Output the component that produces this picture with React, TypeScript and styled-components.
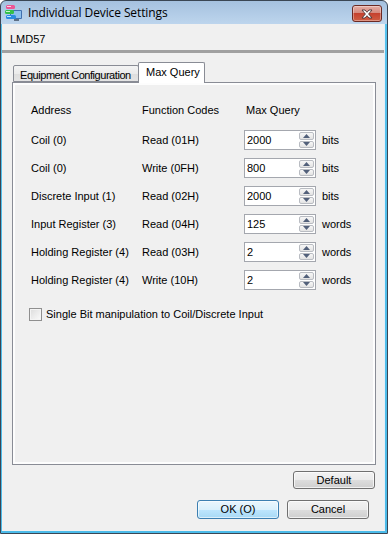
import React from 'react';
import styled, { createGlobalStyle } from 'styled-components';

const Global = createGlobalStyle`
  html, body { margin: 0; padding: 0; background: #ffffff; }
  body {
    width: 388px; height: 534px; overflow: hidden;
    font-family: "Liberation Sans", Arial, sans-serif;
    font-size: 11px; color: #000;
  }
  * { box-sizing: border-box; }
`;

const Window = styled.div`
  width: 388px;
  height: 534px;
  border: 1px solid #3a4654;
  border-radius: 6px 6px 0 0;
  background: linear-gradient(#a5c1df 0, #bdd5ed 23px, #55c2ee 23px, #4bbbe9 100%);
  display: flex;
  flex-direction: column;
  overflow: hidden;
`;

const TitleBar = styled.div`
  height: 23px;
  flex: none;
  display: flex;
  align-items: center;
  padding: 0 5px 0 4px;
  gap: 5px;
`;

const TitleText = styled.div`
  font-family: "Open Sans", "Noto Sans", sans-serif;
  font-size: 12px;
  color: #000;
  flex: 1;
  letter-spacing: -0.1px;
`;

const CloseButton = styled.div`
  width: 30px;
  height: 17px;
  border: 1px solid #6b2a24;
  border-radius: 3px;
  background: linear-gradient(#e6aea5 0%, #d58a7e 45%, #c5412e 50%, #cf5e43 100%);
  box-shadow: inset 0 0 0 1px rgba(255, 255, 255, 0.35);
  display: flex;
  align-items: center;
  justify-content: center;
  margin-top: 2px;
`;

const Client = styled.div`
  flex: 1;
  margin: 0 2px 2px 1px;
  background: #f0f0f0;
  display: flex;
  flex-direction: column;
  border-right: 1px solid #e4eef6;
`;

const DeviceName = styled.div`
  padding: 9px 0 0 8px;
  line-height: 13px;
  height: 22px;
`;

const Separator = styled.div`
  height: 3px;
  background: #a0a0a0;
  margin-top: 4px;
`;

const TabStrip = styled.div`
  display: flex;
  align-items: flex-end;
  margin: 9px 0 0 11px;
  height: 20px;
  position: relative;
  z-index: 1;
`;

const Tab = styled.div<{ $active?: boolean }>`
  height: ${(p) => (p.$active ? '21px' : '17px')};
  width: ${(p) => (p.$active ? '67px' : '126px')};
  margin-left: ${(p) => (p.$active ? '-1px' : '0')};
  margin-bottom: ${(p) => (p.$active ? '-1px' : '0')};
  border: 1px solid #898c95;
  border-bottom: ${(p) => (p.$active ? 'none' : '1px solid #898c95')};
  border-radius: 2px 2px 0 0;
  background: ${(p) =>
    p.$active ? '#ffffff' : 'linear-gradient(#f3f3f3 0%, #ebebeb 50%, #dedede 51%, #e4e4e4 100%)'};
  padding: ${(p) => (p.$active ? '3px 0 0 7px' : '3px 0 0 6px')};
  letter-spacing: ${(p) => (p.$active ? '0' : '-0.45px')};
  line-height: 13px;
  white-space: nowrap;
  overflow: hidden;
`;

const Panel = styled.div`
  width: 364px;
  height: 383px;
  margin-left: 10px;
  border: 1px solid #898c95;
  box-shadow: inset 0 0 0 2px #fdfdfd;
  background: #f0f0f0;
  padding: 14px 0 0 18px;
  display: flex;
  flex-direction: column;
`;

const Grid = styled.div`
  display: grid;
  grid-template-columns: 111px 102px 78px auto;
  align-items: center;
`;

const HeaderCell = styled.div<{ $shift?: number }>`
  height: 26px;
  display: flex;
  align-items: center;
  padding-left: ${(p) => p.$shift ?? 0}px;
  margin-bottom: 3px;
`;

const Cell = styled.div`
  height: 28px;
  display: flex;
  align-items: center;
`;

const SpinBox = styled.div`
  width: 72px;
  height: 20px;
  border: 1px solid #a4a7ae;
  background: #fff;
  display: flex;
  align-items: stretch;
  padding: 1px 1px 1px 2px;
`;

const SpinValue = styled.div`
  flex: 1;
  display: flex;
  align-items: center;
  line-height: 13px;
`;

const SpinButtons = styled.div`
  width: 15px;
  display: flex;
  flex-direction: column;
  gap: 1px;
`;

const SpinButton = styled.div`
  flex: 1;
  border: 1px solid #b9bcc2;
  border-radius: 2px;
  background: linear-gradient(#f7f7f7, #e3e3e3);
  display: flex;
  align-items: center;
  justify-content: center;
`;

const CheckRow = styled.div`
  display: flex;
  align-items: center;
  gap: 4px;
  margin: 13px 0 0 -2px;
  height: 14px;
`;

const CheckBox = styled.div`
  width: 13px;
  height: 13px;
  border: 1px solid #8f8f8f;
  background: linear-gradient(135deg, #dcdcdc, #fbfbfb);
  box-shadow: inset 0 0 0 1px #f4f4f4;
`;

const ButtonRow = styled.div<{ $top: number; $right: number }>`
  display: flex;
  justify-content: flex-end;
  gap: 8px;
  margin-top: ${(p) => p.$top}px;
  padding-right: ${(p) => p.$right}px;
`;

const Button = styled.div<{ $primary?: boolean; $h?: number }>`
  width: 82px;
  height: ${(p) => p.$h ?? 19}px;
  border: 1px solid ${(p) => (p.$primary ? '#3c7fb1' : '#707070')};
  border-radius: 3px;
  background: ${(p) =>
    p.$primary
      ? 'linear-gradient(#eaf6fd 0%, #d9f0fc 50%, #bee6fd 51%, #a7d9f5 100%)'
      : 'linear-gradient(#f2f2f2 0%, #ebebeb 50%, #dddddd 51%, #cfcfcf 100%)'};
  box-shadow: inset 0 0 0 1px ${(p) => (p.$primary ? 'rgba(255,255,255,0.6)' : 'rgba(255,255,255,0.7)')};
  display: flex;
  align-items: center;
  justify-content: center;
  line-height: 13px;
  color: #000;
`;

const AppIcon = () => (
  <svg width="18" height="17" viewBox="0 0 18 17">
    <rect x="5" y="6" width="12" height="9" rx="1" fill="#3f6fae" />
    <rect x="6" y="7" width="10" height="7" fill="#8dc0ee" />
    <rect x="9" y="15" width="5" height="2" fill="#5d6f86" />
    <rect x="1" y="1" width="9" height="4" rx="1.5" fill="#ec5594" />
    <rect x="2" y="2" width="4" height="1" fill="#ffd3e6" />
    <rect x="0" y="6" width="9" height="4" rx="1.5" fill="#34c04a" />
    <rect x="1" y="7" width="4" height="1" fill="#c9f6cc" />
    <rect x="1" y="11" width="10" height="4" rx="1.5" fill="#2a8ce2" />
    <rect x="2" y="12" width="4" height="1" fill="#c2e2ff" />
  </svg>
);

const CloseGlyph = () => (
  <svg width="12" height="10" viewBox="0 0 12 10">
    <path
      d="M1 1 L4 1 L6 3.3 L8 1 L11 1 L7.6 5 L11 9 L8 9 L6 6.7 L4 9 L1 9 L4.4 5 Z"
      fill="#ffffff"
      stroke="#4a3434"
      strokeWidth="0.9"
      strokeLinejoin="round"
    />
  </svg>
);

const Arrow = ({ up }: { up?: boolean }) => (
  <svg width="7" height="4" viewBox="0 0 7 4">
    <path d={up ? 'M0 4 L3.5 0 L7 4 Z' : 'M0 0 L3.5 4 L7 0 Z'} fill="#52607a" />
  </svg>
);

const rows = [
  { addr: 'Coil (0)', fn: 'Read (01H)', value: '2000', unit: 'bits' },
  { addr: 'Coil (0)', fn: 'Write (0FH)', value: '800', unit: 'bits' },
  { addr: 'Discrete Input (1)', fn: 'Read (02H)', value: '2000', unit: 'bits' },
  { addr: 'Input Register (3)', fn: 'Read (04H)', value: '125', unit: 'words' },
  { addr: 'Holding Register (4)', fn: 'Read (03H)', value: '2', unit: 'words' },
  { addr: 'Holding Register (4)', fn: 'Write (10H)', value: '2', unit: 'words' },
];

export default function App() {
  return (
    <>
      <Global />
      <Window>
        <TitleBar>
          <AppIcon />
          <TitleText>Individual Device Settings</TitleText>
          <CloseButton>
            <CloseGlyph />
          </CloseButton>
        </TitleBar>
        <Client>
          <DeviceName>LMD57</DeviceName>
          <Separator />
          <TabStrip>
            <Tab>Equipment Configuration</Tab>
            <Tab $active>Max Query</Tab>
          </TabStrip>
          <Panel>
            <Grid>
              <HeaderCell>Address</HeaderCell>
              <HeaderCell>Function Codes</HeaderCell>
              <HeaderCell $shift={2}>Max Query</HeaderCell>
              <HeaderCell />
              {rows.map((r, i) => (
                <React.Fragment key={i}>
                  <Cell>{r.addr}</Cell>
                  <Cell>{r.fn}</Cell>
                  <Cell>
                    <SpinBox>
                      <SpinValue>{r.value}</SpinValue>
                      <SpinButtons>
                        <SpinButton>
                          <Arrow up />
                        </SpinButton>
                        <SpinButton>
                          <Arrow />
                        </SpinButton>
                      </SpinButtons>
                    </SpinBox>
                  </Cell>
                  <Cell>{r.unit}</Cell>
                </React.Fragment>
              ))}
            </Grid>
            <CheckRow>
              <CheckBox />
              <span>Single Bit manipulation to Coil/Discrete Input</span>
            </CheckRow>
          </Panel>
          <ButtonRow $top={6} $right={9}>
            <Button $h={18}>Default</Button>
          </ButtonRow>
          <ButtonRow $top={11} $right={15}>
            <Button $primary>OK (O)</Button>
            <Button>Cancel</Button>
          </ButtonRow>
        </Client>
      </Window>
    </>
  );
}
